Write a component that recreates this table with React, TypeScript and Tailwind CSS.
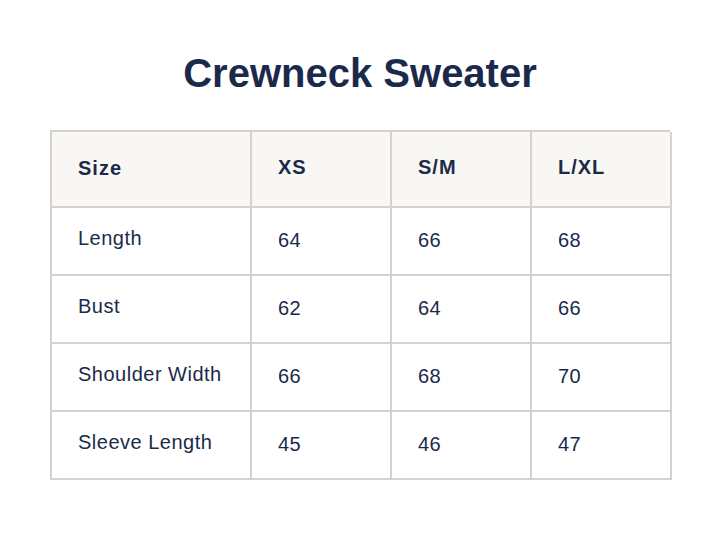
const sizes = ["XS", "S/M", "L/XL"];

const rows: { label: string; values: number[] }[] = [
  { label: "Length", values: [64, 66, 68] },
  { label: "Bust", values: [62, 64, 66] },
  { label: "Shoulder Width", values: [66, 68, 70] },
  { label: "Sleeve Length", values: [45, 46, 47] },
];

export default function App() {
  return (
    <div className="min-h-[548px] w-[720px] bg-white px-[50px] pt-[49px] text-[#1b2a4a] font-['Liberation_Sans',Arial,sans-serif]">
      <h1 className="text-center text-[40px] leading-[48px] font-bold">Crewneck Sweater</h1>

      <div className="mt-[33px] grid grid-cols-[200px_140px_140px_140px] border-l-2 border-t-2 border-[#d5d2cc]">
        {/* Header */}
        <div className="flex h-[76px] items-center border-b-2 border-r-2 border-[#d5d2cc] bg-[#f9f7f3] pl-[26px] pb-0.5 text-[20px] font-bold tracking-[1px]">
          Size
        </div>
        {sizes.map((s) => (
          <div
            key={s}
            className="flex h-[76px] items-center border-b-2 border-r-2 border-[#d5d2cc] bg-[#f9f7f3] pl-[26px] pb-1 text-[20px] font-bold tracking-[1px]"
          >
            {s}
          </div>
        ))}

        {/* Body */}
        {rows.map((row) => (
          <div key={row.label} className="contents">
            <div className="flex h-[68px] items-center border-b-2 border-r-2 border-[#d5d2cc] pl-[26px] pb-[6px] text-[20px] tracking-[0.5px]">
              {row.label}
            </div>
            {row.values.map((v, i) => (
              <div
                key={i}
                className="flex h-[68px] items-center border-b-2 border-r-2 border-[#d5d2cc] pl-[26px] pb-0.5 text-[20px] tracking-[0.5px]"
              >
                {v}
              </div>
            ))}
          </div>
        ))}
      </div>
    </div>
  );
}
